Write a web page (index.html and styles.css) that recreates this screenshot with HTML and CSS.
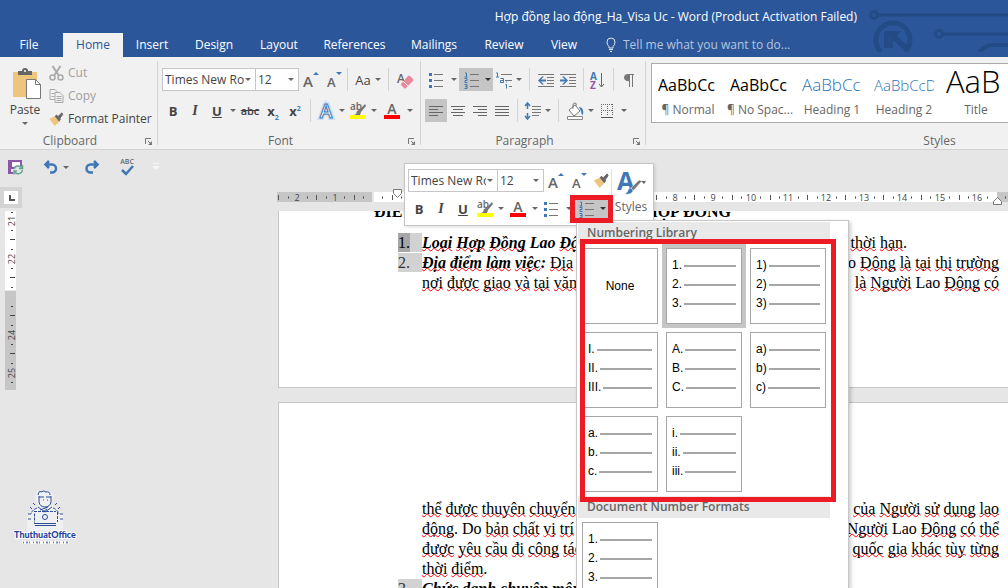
FILE: index.html
```html
<!DOCTYPE html>
<html lang="en">
<head>
<meta charset="utf-8">
<meta name="viewport" content="width=device-width, initial-scale=1">
<title>Hợp đồng lao động_Ha_Visa Uc - Word</title>
<link rel="stylesheet" href="styles.css">
</head>
<body>
<svg class="sprite" aria-hidden="true">
  <symbol id="grow" viewBox="0 0 22 22"><text x="3" y="18" class="g-letter" font-size="15">A</text><path d="M13 6l3-3 3 3z" fill="#3f78b5"/></symbol>
  <symbol id="shrink" viewBox="0 0 22 22"><text x="4" y="18" class="g-letter" font-size="13">A</text><path d="M13 3h6l-3 3z" fill="#3f78b5"/></symbol>
  <symbol id="eraser" viewBox="0 0 22 22"><text x="3" y="14" class="g-letter" font-size="12">A</text><path d="M7 15l7-8q1-1 2 0l3 3q1 1 0 2l-7 7q-1 1-2 0l-3-3z" fill="#e8889a"/><path d="M9 12l5 5" stroke="#f1f1f1"/></symbol>
  <symbol id="effects" viewBox="0 0 22 22"><text x="11" y="18" text-anchor="middle" font-size="19" class="g-glow">A</text><text x="11" y="18" text-anchor="middle" font-size="19" class="g-effect">A</text></symbol>
  <symbol id="highlight" viewBox="0 0 22 22"><text x="3" y="10" class="g-letter" font-size="10">ab</text><path d="M18 4l-6 6-2 1-1 3-2 1 6 0 1-3 5-6z" fill="#777"/><path d="M3 15h16v4H3z" fill="#ff0"/></symbol>
  <symbol id="fontcolor" viewBox="0 0 22 22"><text x="11" y="14" text-anchor="middle" class="g-letter" font-size="14">A</text><path d="M3 15h16v4H3z" fill="#f00"/></symbol>
  <symbol id="bullets" viewBox="0 0 22 22"><path d="M3 4h3v3H3zM3 10h3v3H3zM3 16h3v3H3z" fill="#3f78b5"/><path d="M8 5.500h9M8 11.500h9M8 17.500h9" stroke="#777"/></symbol>
  <symbol id="numbering" viewBox="0 0 22 22"><path d="M4 4h1.500v4M3.500 8h3M3.500 9.500h2.500v2h-2v2h2.500M3.500 15.500h2.500v4h-2.500M4 17.500h2" fill="none" stroke="#3f78b5"/><path d="M9 5.500h9M9 11.500h9M9 17.500h9" stroke="#777"/></symbol>
  <symbol id="multilevel" viewBox="0 0 22 22"><path d="M3 4h1.500v4M6 8H3" fill="none" stroke="#3f78b5"/><path d="M7.500 9.500h3v4h-3v-2h3M12.500 15.500h1v4M13 13h1" fill="none" stroke="#3f78b5"/><path d="M8 5.500h11M12 11.500h7M16 17.500h3" stroke="#777"/></symbol>
  <symbol id="outdent" viewBox="0 0 22 22"><path d="M3 5.500h16M12 8.500h7M12 11.500h7M12 14.500h7M3 17.500h16" stroke="#777"/><path d="M3 11.500l4-4h2l-3 3h5v2H6l3 3H7z" fill="#3f78b5"/></symbol>
  <symbol id="indent" viewBox="0 0 22 22"><path d="M3 5.500h16M12 8.500h7M12 11.500h7M12 14.500h7M3 17.500h16" stroke="#777"/><path d="M11 11.500l-4-4H5l3 3H3v2h5l-3 3h2z" fill="#3f78b5"/></symbol>
  <symbol id="sort" viewBox="0 0 22 22"><text x="3" y="11" font-size="10" class="g-blue">A</text><text x="3" y="20" font-size="10" class="g-purple">Z</text><path d="M14.500 4v14M12 15l2.500 3 2.500-3" fill="none" stroke="#666"/></symbol>
  <symbol id="pilcrow" viewBox="0 0 22 22"><path d="M6 9a4 4 0 0 1 4-4h6v1h-1v12h-1V6h-2v12h-1v-6a4 4 0 0 1-5-3z" fill="#777"/></symbol>
  <symbol id="left" viewBox="0 0 22 22"><path d="M4 6.500h14M4 9.500h9M4 12.500h14M4 15.500h9" stroke="#666"/></symbol>
  <symbol id="center" viewBox="0 0 22 22"><path d="M4 6.500h14M6 9.500h10M4 12.500h14M6 15.500h10" stroke="#666"/></symbol>
  <symbol id="right" viewBox="0 0 22 22"><path d="M4 6.500h14M9 9.500h9M4 12.500h14M9 15.500h9" stroke="#666"/></symbol>
  <symbol id="justify" viewBox="0 0 22 22"><path d="M4 6.500h14M4 9.500h14M4 12.500h14M4 15.500h14" stroke="#666"/></symbol>
  <symbol id="spacing" viewBox="0 0 22 22"><path d="M6.500 3v6M6.500 13v6M4 6l2.500-3L9 6M4 16l2.500 3L9 16" fill="none" stroke="#3f78b5" stroke-width="1.500"/><path d="M11 6.500h9M11 9.500h9M11 12.500h9M11 15.500h7" stroke="#777"/></symbol>
  <symbol id="fill" viewBox="0 0 22 22"><path d="M5 10l6-5 5 6-6 5z" fill="#fff" stroke="#777"/><path d="M9 9V5q0-2 2-2t1 3" fill="none" stroke="#777"/><path d="M15 7q5 0 4 8-2-1-2-4z" fill="#3f78b5"/><path d="M3.500 16.500h15v3h-15z" fill="#fff" stroke="#888"/></symbol>
  <symbol id="borders" viewBox="0 0 22 22"><path d="M5 4.500h12M5 10.500h12M5.500 4v12M11.500 4v12M16.500 4v12" stroke="#666" stroke-dasharray="1 1"/><path d="M5 17.500h12" stroke="#555"/></symbol>
  <symbol id="brush" viewBox="0 0 18 18"><path d="M1 9l6-3 5 6-5 5q-3-4-6-8z" fill="#edc57c"/><path d="M7 6l2-2 5 5-2 3z" fill="#666"/><path d="M11 6l4-4 1 2-3 4z" fill="#666" stroke="#666"/></symbol>
  <symbol id="launcher" viewBox="0 0 9 9"><path d="M1.500 7V1.500H7M4 4l3 3" fill="none" stroke="#777"/><path d="M8 4v4H4z" fill="#777"/></symbol>
</svg>

<header class="titlebar">
  <svg class="circuit" viewBox="0 0 140 52" aria-hidden="true">
    <g fill="none" stroke="#234b86" stroke-width="3"><circle cx="6" cy="15" r="3.500"/><path d="M10 15h130"/><circle cx="71" cy="34" r="3.500"/><path d="M75 34h65"/><path d="M111 52q7-7 13-7h16" stroke-width="4"/></g>
    <path d="M13 52A17 17 0 1 1 37 52" fill="none" stroke="#234b86" stroke-width="5"/><path d="M16 31h17l-4 5 11 10-4 4-11-10v8h-9z" fill="#234b86"/><path d="M22 38l-1 7v-7z" fill="#2b579a"/>
  </svg>
  <h1 class="title">Hợp đồng lao động_Ha_Visa Uc - Word (Product Activation Failed)</h1>
  <div class="tabrow">
    <nav class="tabs">
      <button>File</button><button class="active">Home</button><button>Insert</button><button>Design</button><button>Layout</button><button>References</button><button>Mailings</button><button>Review</button><button>View</button>
    </nav>
    <label class="tell">
      <svg width="10" height="16" viewBox="0 0 10 16" aria-hidden="true"><path d="M3 11V9.500Q1 8 1 5a4 4 0 0 1 8 0q0 3-2 4.500V11zM3 12.500h4M4 14.500h2" fill="none" stroke="#dfe7f2"/></svg>
      <input type="text" placeholder="Tell me what you want to do..." aria-label="Tell me what you want to do">
    </label>
  </div>
</header>

<section class="ribbon">
  <section class="group clipboard">
    <div class="clip">
      <button class="paste">
        <svg width="30" height="32" viewBox="0 0 30 32" aria-hidden="true"><path d="M1 4h24v25H1z" fill="#edc57c"/><path d="M6 7V3h4q0-3 3-3t3 3h4v4z" fill="#666"/><circle cx="13" cy="3" r="1" fill="#fff"/><path d="M14.500 11.500h9l5 5v14h-14z" fill="#fff" stroke="#777"/><path d="M23.500 11.500v5h5" fill="none" stroke="#777"/></svg>
        <span>Paste</span><i class="caret"></i>
      </button>
      <div class="clip-list">
        <button class="off"><svg width="16" height="16" viewBox="0 0 16 16" aria-hidden="true"><path d="M4 1l6 9M12 1L6 10" stroke="#aaa" stroke-width="2"/><circle cx="4" cy="12.500" r="2.500" fill="none" stroke="#aaa" stroke-width="1.500"/><circle cx="12" cy="12.500" r="2.500" fill="none" stroke="#aaa" stroke-width="1.500"/></svg>Cut</button>
        <button class="off"><svg width="16" height="16" viewBox="0 0 16 16" aria-hidden="true"><path d="M1.500 1.500h5l2 2v8h-7zM3 5.500h4M3 8.500h3" fill="none" stroke="#aaa"/><path d="M6.500 4.500h5l3 3v7h-8z" fill="#f1f1f1" stroke="#aaa"/><path d="M8 8.500h5M8 10.500h5M8 12.500h5" stroke="#aaa"/></svg>Copy</button>
        <button><svg width="16" height="16" aria-hidden="true"><use href="#brush"/></svg>Format Painter</button>
      </div>
    </div>
    <footer><span>Clipboard</span><button aria-label="Clipboard settings"><svg width="9" height="9"><use href="#launcher"/></svg></button></footer>
  </section>

  <section class="group font">
    <div class="tools">
      <label class="combo w94"><select aria-label="Font"><option>Times New Roman</option></select></label><label class="combo w43"><select aria-label="Font size"><option>12</option></select></label>
      <button class="w24" aria-label="Grow font"><svg><use href="#grow"/></svg></button><button aria-label="Shrink font"><svg><use href="#shrink"/></svg></button><i class="sep w5"></i><button class="w36">Aa<i class="caret"></i></button><i class="sep w5"></i><button class="w28" aria-label="Clear formatting"><svg><use href="#eraser"/></svg></button>
    </div>
    <div class="tools">
      <button><b>B</b></button><button><em>I</em></button><button><u>U</u></button><button class="w10" aria-label="Underline style"><i class="caret"></i></button><button class="w24"><s>abc</s></button><button><b>x<sub>2</sub></b></button><button><b>x<sup>2</sup></b></button><i class="sep w8"></i><button class="w24" aria-label="Text effects"><svg><use href="#effects"/></svg></button><button class="w8" aria-label="More effects"><i class="caret"></i></button><button class="w24" aria-label="Highlight"><svg><use href="#highlight"/></svg></button><button class="w8" aria-label="Highlight colours"><i class="caret"></i></button><button class="w28" aria-label="Font colour"><svg><use href="#fontcolor"/></svg></button><button class="w8" aria-label="Font colours"><i class="caret"></i></button>
    </div>
    <footer><span>Font</span><button aria-label="Font settings"><svg width="9" height="9"><use href="#launcher"/></svg></button></footer>
  </section>

  <section class="group para">
    <div class="tools">
      <button class="w24" aria-label="Bullets"><svg><use href="#bullets"/></svg></button><button class="w10" aria-label="Bullet styles"><i class="caret"></i></button><button class="w34 on" aria-label="Numbering"><svg><use href="#numbering"/></svg><i class="caret dark"></i></button><button aria-label="Multilevel list"><svg><use href="#multilevel"/></svg></button><button class="w8" aria-label="Multilevel styles"><i class="caret"></i></button><i class="sep w12"></i><button aria-label="Decrease indent"><svg><use href="#outdent"/></svg></button><button aria-label="Increase indent"><svg><use href="#indent"/></svg></button><i class="sep w8"></i><button aria-label="Sort"><svg><use href="#sort"/></svg></button><i class="sep w8"></i><button class="w24" aria-label="Show marks"><svg><use href="#pilcrow"/></svg></button>
    </div>
    <div class="tools">
      <button class="on" aria-label="Align left"><svg><use href="#left"/></svg></button><button aria-label="Center"><svg><use href="#center"/></svg></button><button aria-label="Align right"><svg><use href="#right"/></svg></button><button aria-label="Justify"><svg><use href="#justify"/></svg></button><i class="sep w8"></i><button aria-label="Line spacing"><svg><use href="#spacing"/></svg></button><button class="w10" aria-label="Spacing options"><i class="caret"></i></button><i class="sep w10"></i><button class="w24" aria-label="Shading"><svg><use href="#fill"/></svg></button><button class="w8" aria-label="Shading colours"><i class="caret"></i></button><button class="w24" aria-label="Borders"><svg><use href="#borders"/></svg></button><button class="w10" aria-label="Border options"><i class="caret"></i></button>
    </div>
    <footer><span>Paragraph</span><button aria-label="Paragraph settings"><svg width="9" height="9"><use href="#launcher"/></svg></button></footer>
  </section>

  <section class="group styles">
    <div class="gallery">
      <button><span class="sample">AaBbCc</span><span>¶ Normal</span></button>
      <button><span class="sample">AaBbCc</span><span>¶ No Spac...</span></button>
      <button><span class="sample h1">AaBbCc</span><span>Heading 1</span></button>
      <button><span class="sample h2">AaBbCcD</span><span>Heading 2</span></button>
      <button><span class="sample big">AaB</span><span>Title</span></button>
    </div>
    <footer><span>Styles</span></footer>
  </section>
</section>

<nav class="quick" aria-label="Quick access">
  <button aria-label="Save"><svg width="16" height="16" viewBox="0 0 16 16"><path d="M0 1h14v6h-2V3H4v5h3v2H3v3h2v2H0z" fill="#8c55aa"/><path d="M4 3h8v4H4z" fill="#fff"/><path d="M6 10a4.500 4.500 0 0 1 8-1M14.500 11a4.500 4.500 0 0 1-8 2M14.500 6v3.500H11M6 15.500V12h3" fill="none" stroke="#62a58d" stroke-width="1.500"/></svg></button>
  <button aria-label="Undo"><svg width="16" height="16" viewBox="0 0 16 16"><path d="M6 2L2.500 5.500 6 9M2.500 5.500H9a4 4 0 0 1 0 8H7" fill="none" stroke="#3f78b5" stroke-width="2.500"/></svg><i class="caret"></i></button>
  <button aria-label="Redo"><svg width="16" height="16" viewBox="0 0 16 16"><path d="M10 2l3.500 3.500L10 9M13.500 5.500H6.500a4 4 0 0 0 0 8H9" fill="none" stroke="#3f78b5" stroke-width="2.500"/></svg></button>
  <button aria-label="Spelling"><svg width="16" height="18" viewBox="0 0 16 18"><text x="8" y="6" text-anchor="middle" class="g-letter" font-size="7">ABC</text><path d="M3 12l4 4 7-8" fill="none" stroke="#3f78b5" stroke-width="2.500"/></svg></button>
  <button aria-label="Customize"><svg width="8" height="8" viewBox="0 0 8 8"><path d="M1 .5h6M1 3.500h6l-3 3z" fill="#f6f6f6" stroke="#f6f6f6"/></svg></button>
</nav>

<div class="ruler-row">
  <button class="tabstop" aria-label="Tab stop"><svg width="14" height="14" viewBox="0 0 14 14"><path d="M5 4h2v4h4v2H5z" fill="#555"/></svg></button>
  <div class="ruler">
    <svg width="736" height="20" viewBox="274 187 736 20" aria-hidden="true">
      <path d="M277 192h95v10h-95zM997 192h13v10h-13z" fill="#c6c6c6"/><path d="M374 192h623v10H374z" fill="#fff"/>
      <path d="M278.500 195v5M316.500 195v5M354.500 195v5M392.500 195v5M656.500 195v5M694.500 195v5M732.500 195v5M770.500 195v5M807.500 195v5M845.500 195v5M883.500 195v5M921.500 195v5M959.500 195v5" stroke="#555"/>
      <path d="M288 197.500h1M307 197.500h1M326 197.500h1M344 197.500h1M363 197.500h1M382 197.500h1M401 197.500h1M666 197.500h1M685 197.500h1M704 197.500h1M722 197.500h1M741 197.500h1M760 197.500h1M779 197.500h1M798 197.500h1M817 197.500h1M836 197.500h1M855 197.500h1M874 197.500h1M893 197.500h1M911 197.500h1M930 197.500h1M949 197.500h1M968 197.500h1M987 197.500h1M1005 197.500h1" stroke="#444" stroke-width="2"/>
      <g class="ticks"><text x="297" y="201">2</text><text x="335" y="201">1</text><text x="675" y="201">8</text><text x="713" y="201">9</text><text x="751" y="201">10</text><text x="788" y="201">11</text><text x="826" y="201">12</text><text x="864" y="201">13</text><text x="902" y="201">14</text><text x="940" y="201">15</text><text x="977" y="201">16</text></g>
      <path d="M393.500 189.500h8v4l-4 4-4-4zM993.500 204.500v-3l4-4 4 4v3z" fill="#fff" stroke="#777"/>
    </svg>
  </div>
</div>

<main class="workspace">
  <svg class="vruler" width="11" height="179" viewBox="0 0 11 179" aria-hidden="true">
    <path d="M0 0h11v79H0z" fill="#fff"/><path d="M0 80h11v99H0z" fill="#c6c6c6"/>
    <path d="M5 28.500h5M5 66.500h5M5 104.500h5M5 142.500h5" stroke="#444"/>
    <path d="M6 1.500h2M6 19.500h2M6 38.500h2M6 57.500h2M6 76.500h2M6 95.500h2M6 114.500h2M6 133.500h2M6 152.500h2M6 171.500h2" stroke="#444"/>
    <g class="ticks"><text transform="translate(10 10)rotate(-90)">21</text><text transform="translate(10 48)rotate(-90)">22</text><text transform="translate(10 124)rotate(-90)">24</text><text transform="translate(10 162)rotate(-90)">25</text></g>
  </svg>
  <div class="pages">
    <article class="page first" lang="vi">
      <h2><span>ĐIỀU 1:</span><span>HỢP ĐỒNG</span></h2>
      <div class="item"><span class="num sel"><i>1.</i></span><p class="line"><span><strong><q>Loại</q> <q>Hợp</q> <q>Đồng</q> Lao <q>Động</q></strong></span><span class="short"><q>thời</q> <q>hạn</q>.</span></p></div>
      <div class="item"><span class="num">2.</span><div>
        <p class="line"><span><strong><q>Địa</q> <q>điểm</q> <q>làm</q> <q>việc</q>:</strong> <q>Địa</q></span><span>Lao <q>Động</q> <q>là</q> <q>tại</q> <q>thị</q> <q>trường</q></span></p>
        <p class="line"><span><q>nơi</q> <q>được</q> <q>giao</q> <q>và</q> <q>tại</q> <q>văn</q></span><span><q>là</q> <q>Người</q> Lao <q>Động</q> <q>có</q></span></p></div>
      </div>
    </article>
    <article class="page second" lang="vi">
      <div class="item"><span></span><div>
        <p class="line"><span><q>thể</q> <q>được</q> <q>thuyên</q> <q>chuyển</q></span><span><q>của</q> <q>Người</q> <q>sử</q> <q>dụng</q> <q>lao</q></span></p>
        <p class="line"><span><q>động</q>. Do <q>bản</q> <q>chất</q> <q>vị</q> <q>trí</q></span><span><q>Người</q> Lao <q>Động</q> <q>có</q> <q>thể</q></span></p>
        <p class="line"><span><q>được</q> <q>yêu</q> <q>cầu</q> <q>đi</q> <q>công</q> <q>tác</q></span><span><q>quốc</q> <q>gia</q> <q>khác</q> <q>tùy</q> <q>từng</q></span></p>
        <p class="line"><span><q>thời</q> <q>điểm</q>.</span></p></div>
      </div>
      <div class="item"><span class="num">3.</span><p class="line"><span><strong><q>Chức</q> <q>danh</q> <q>chuyên</q> <q>môn</q></strong></span></p></div>
    </article>
  </div>
</main>

<svg class="logo" width="70" height="60" viewBox="0 0 70 60" role="img" aria-label="ThuthuatOffice">
  <path d="M17 38V26q2-6 12-8l-4-8 1-9h14l4 5-3 10q9 3 12 8v17H17z" fill="#f7f9fc" opacity=".5"/>
  <g fill="none" stroke="#2c4c96"><path d="M28 5q1-5 3-3 3-2 5 0 4-1 4 3M29 6v6q1 5 6 5t6-5V6M29 7h5M36 7h5"/><path d="M28 17l7 5 7-5M30 20l8-3M33 22l4-3"/><path d="M27 18q-5 2-6 6M43 18q5 2 6 6M24.500 23.500v9M47.500 22v10M24 21.500h22" stroke-dasharray="3 1"/><circle cx="35" cy="27" r="2.500"/><path d="M24 33.500h22M25 35.500h21"/><path d="M18 24h3M18 29h3M20 17l2 2M23 13l2 2M50 24h3M50 29h3M50 17l-2 2M47 13l-2 2M33 10h1M37 10h1"/></g>
  <text x="35" y="48" text-anchor="middle" class="brand">ThuthuatOffice</text>
  <path d="M12 52.500h47" stroke="#fff" stroke-width="3"/><path d="M13 52.500h45" stroke="#7287b8" stroke-width="2" stroke-dasharray="1 2 2 1 1 3"/>
</svg>

<aside class="mini" aria-label="Mini toolbar">
  <div class="mini-main">
    <div class="tools">
      <label class="combo w90"><select aria-label="Font name"><option>Times New Roman</option></select></label><label class="combo w46"><select aria-label="Text size"><option>12</option></select></label>
      <button class="w24" aria-label="Grow"><svg><use href="#grow"/></svg></button><button aria-label="Shrink"><svg><use href="#shrink"/></svg></button><button aria-label="Format painter"><svg class="small"><use href="#brush"/></svg></button>
    </div>
    <div class="tools">
      <button><b>B</b></button><button><em>I</em></button><button><u>U</u></button><button aria-label="Highlighter"><svg><use href="#highlight"/></svg></button><button class="w10" aria-label="Highlighter colours"><i class="caret"></i></button><button class="w24" aria-label="Colour"><svg><use href="#fontcolor"/></svg></button><button class="w10" aria-label="Colours"><i class="caret"></i></button><button class="w24" aria-label="Bullet list"><svg><use href="#bullets"/></svg></button><button class="w10" aria-label="Bullet list styles"><i class="caret"></i></button><button class="w34 on" aria-label="Numbered list"><svg><use href="#numbering"/></svg><i class="caret dark"></i></button>
    </div>
  </div>
  <button class="mini-styles"><svg width="32" height="28" viewBox="0 0 32 28" aria-hidden="true"><text x="2" y="21" font-size="25" class="g-blue">A</text><path d="M24 11l-8 8-2 4 5-2 8-9z" fill="#777" stroke="#fff" stroke-width=".5"/><path d="M14 19q4 0 4 3-2 4-8 3 3-2 4-6z" fill="#3f78b5" stroke="#fff" stroke-width=".5"/><path d="M26 12h5l-2 3z" fill="#666"/></svg><span>Styles</span></button>
</aside>

<aside class="menu" aria-label="Numbering">
  <h3>Numbering Library</h3>
  <div class="grid">
    <button class="cell none">None</button>
    <button class="cell chosen"><span>1.</span><span>2.</span><span>3.</span></button>
    <button class="cell"><span>1)</span><span>2)</span><span>3)</span></button>
    <button class="cell"><span>I.</span><span>II.</span><span>III.</span></button>
    <button class="cell"><span>A.</span><span>B.</span><span>C.</span></button>
    <button class="cell"><span>a)</span><span>b)</span><span>c)</span></button>
    <button class="cell"><span>a.</span><span>b.</span><span>c.</span></button>
    <button class="cell"><span>i.</span><span>ii.</span><span>iii.</span></button>
  </div>
  <h3>Document Number Formats</h3>
  <div class="grid"><button class="cell"><span>1.</span><span>2.</span><span>3.</span></button></div>
</aside>
<div class="mark mark-button"></div>
<div class="mark mark-library"></div>
</body>
</html>
```

FILE: styles.css
```css
* { box-sizing: border-box; }
body {
  margin: 0;
  height: 100vh;
  display: flex;
  flex-direction: column;
  position: relative;
  overflow: hidden;
  background: #e6e6e6;
  color: #444;
  font: 12px/16px "Segoe UI", "Open Sans", "Noto Sans", sans-serif;
}
button, input, select { font: inherit; color: inherit; }
button {
  border: 0;
  padding: 0;
  background: none;
  display: flex;
  align-items: center;
  justify-content: center;
}
h1, h2, h3, p { margin: 0; font-size: inherit; font-weight: inherit; }
.sprite { display: none; }
.g-letter { font-weight: 600; fill: #666; }
.g-blue { font-weight: 700; fill: #3f78b5; }
.g-purple { font-weight: 700; fill: #8c55aa; }
.g-effect { font-weight: 600; fill: #fff; stroke: #3f78b5; stroke-width: 1px; }
.g-glow { font-weight: 600; fill: none; stroke: #cfe0f2; stroke-width: 4px; }

/* Title bar */
.titlebar { position: relative; flex: none; background: #2b579a; color: #fff; }
.circuit { position: absolute; right: 0; top: 0; width: 140px; height: 52px; }
.title { position: relative; height: 33px; padding-right: 151px; line-height: 33px; text-align: right; }
.tabrow { position: relative; display: flex; }
.tabs {
  display: grid;
  grid-template-columns: 63px 60px 58px 66px 64px 87px 72px 68px 52px;
  height: 24px;
}
.tabs button:first-child { padding-right: 5px; }
.tabs .active { background: #f1f1f1; color: #2b579a; }
.tell { flex: 1; display: flex; align-items: center; gap: 7px; padding-left: 16px; }
.tell input { flex: 1; border: 0; padding: 0; background: none; outline: 0; }
.tell input::placeholder { color: #b5c5de; opacity: 1; }

/* Ribbon */
.ribbon {
  flex: none;
  display: flex;
  overflow: hidden;
  padding: 4px 0;
  height: 93px;
  background: #f1f1f1;
  border-bottom: 1px solid #d2d2d2;
}
.group { flex: none; display: flex; flex-direction: column; border-right: 1px solid #d4d4d4; }
.clipboard { width: 158px; }
.font { width: 263px; }
.para { width: 225px; }
.styles { width: 588px; }
.font, .para { gap: 8px; padding: 7px 0 0 4px; }
.group footer { margin: auto 0 -4px; display: flex; align-items: center; color: #666; }
.group footer span { flex: 1; text-align: center; }
.group footer button { width: 17px; }
.group.font footer, .group.para footer { margin-left: -4px; }
.clip { display: flex; }
.paste { width: 48px; flex-direction: column; padding: 2px 0 0 2px; }
.paste svg { margin: 0 0 2px 4px; }
.paste .caret { margin-top: 4px; }
.clip-list { display: grid; grid-auto-rows: 23px; }
.clip-list button { gap: 3px; justify-content: flex-start; }
.clip-list svg { width: 17px; }
.off { color: #a0a0a0; }
.tools { display: flex; height: 23px; }
.tools button { width: 22px; flex: none; }
.tools svg { width: 22px; height: 22px; flex: none; }
.tools svg.small { width: 17px; height: 17px; }
.tools b { font-size: 13px; }
.tools em { font: italic bold 14px "Liberation Serif", serif; }
.tools u { font-size: 13px; font-weight: 700; }
.tools s { font-size: 11px; font-weight: 600; }
.tools sub, .tools sup { font-size: 7px; line-height: 0; color: #3f78b5; }
.tools .on { background: #c5c5c5; }
.tools .w5 { width: 5px; }
.tools .w8 { width: 8px; }
.tools .w10 { width: 10px; }
.tools .w12 { width: 12px; }
.tools .w24 { width: 24px; }
.tools .w28 { width: 28px; }
.tools .w34 { width: 34px; }
.tools .w36 { width: 36px; font-size: 13px; }
.w36 .caret { margin-left: 4px; }
.w43 { width: 43px; }
.w46 { width: 46px; }
.w90 { width: 90px; }
.w94 { width: 94px; }
.caret {
  flex: none;
  width: 0;
  border: 3px solid transparent;
  border-top-color: #666;
  border-bottom: 0;
}
.caret.dark { border-top-color: #333; margin-left: 2px; }
.sep { display: flex; justify-content: center; }
.sep::before { content: ""; width: 1px; background: #d4d4d4; }
.combo {
  position: relative;
  display: flex;
  background: #fff;
  border: 1px solid #c6c6c6;
}
.combo + .combo { border-left: 0; }
.combo select {
  appearance: none;
  width: 100%;
  border: 0;
  padding: 0 11px 0 2px;
  background: none;
  overflow: hidden;
}
.combo::after {
  content: "";
  position: absolute;
  right: 4px;
  top: 9px;
  border: 3px solid transparent;
  border-top-color: #666;
  border-bottom: 0;
}
.gallery {
  display: flex;
  margin: 2px 0 0 5px;
  height: 60px;
  background: #fff;
  border: 1px solid #ababab;
}
.gallery button { width: 72px; flex-direction: column; justify-content: flex-end; padding-bottom: 4px; color: #666; white-space: nowrap; }
.gallery .sample {
  width: 60px;
  height: 34px;
  line-height: 34px;
  overflow: hidden;
  text-align: left;
  font-size: 16px;
  color: #000;
}
.gallery .h1 { color: #2e74b5; font-size: 17px; font-weight: 300; }
.gallery .h2 { color: #2e74b5; font-size: 15px; font-weight: 300; }
.gallery .big { font-size: 31px; line-height: 26px; font-weight: 300; }

/* Quick access */
.quick { flex: none; display: flex; align-items: center; height: 37px; padding: 0 0 3px 8px; }
.quick button { height: 20px; }
.quick button:nth-child(2) { margin-left: 19px; gap: 4px; }
.quick button:nth-child(3) { margin-left: 15px; }
.quick button:nth-child(4) { margin-left: 19px; }
.quick button:nth-child(5) { margin-left: 17px; }

/* Rulers */
.ruler-row { flex: none; display: flex; height: 24px; padding-bottom: 3px; }
.tabstop { flex: none; width: 22px; height: 21px; border: 4px solid #d4d4d4; background: #fff; }
.ruler { flex: 1; margin-left: 252px; overflow: hidden; }
.ruler svg { display: block; }
.ticks text { font-size: 9px; fill: #444; text-anchor: middle; }

/* Document */
.workspace { flex: 1; display: flex; min-height: 0; }
.vruler { flex: none; margin-left: 5px; }
.pages { flex: 1; min-width: 0; display: flex; flex-direction: column; gap: 14px; margin-left: 262px; }
.page {
  flex: none;
  overflow: hidden;
  padding: 0 9px 0 119px;
  background: #fff;
  border: 1px solid #c6c6c6;
  border-right: 0;
  color: #000;
  font: 16px/20px "Liberation Serif", serif;
}
.first { border-top: 0; padding-bottom: 94px; }
.second { padding-top: 96px; }
.page h2 { display: flex; justify-content: space-between; margin: -9px 268px 11px -24px; font-weight: 700; }
.item { display: grid; grid-template-columns: 24px 1fr; }
.num { height: 19px; background: #d2d2d2; color: #333; }
.num i { display: block; width: 12px; height: 19px; font-style: normal; }
.sel i { background: #a6a6a6; color: #000; }
.line { display: flex; justify-content: space-between; white-space: nowrap; }
.line .short { padding-right: 92px; }
.page strong { font-style: italic; }
.page q { quotes: none; text-decoration: underline wavy #f00 1px; text-decoration-skip-ink: none; text-underline-offset: -1px; }

.logo { position: absolute; left: 10px; top: 490px; }
.brand { font: 900 9px Lato, sans-serif; fill: #24439a; stroke: #fff; stroke-width: 2px; paint-order: stroke; }

/* Floating toolbar */
.mini {
  position: absolute;
  left: 404px;
  top: 163px;
  display: flex;
  padding: 5px 3px 4px;
  background: #fff;
  border: 1px solid #c6c6c6;
  box-shadow: 1px 1px 3px #0002;
}
.mini-main { display: grid; gap: 4px; border-right: 1px solid #e1e1e1; width: 204px; height: 52px; }
.mini-styles { width: 38px; flex-direction: column; justify-content: flex-start; gap: 2px; color: #666; }

/* Numbering menu */
.menu {
  position: absolute;
  left: 576px;
  top: 220px;
  bottom: 0;
  width: 273px;
  overflow: hidden;
  padding: 1px 0 0 1px;
  background: #fff;
  border: 1px solid #c6c6c6;
  border-bottom: 0;
  box-shadow: 2px 2px 4px #0003;
}
.menu h3 { width: 252px; height: 22px; line-height: 22px; padding-left: 9px; background: #e9e9e9; color: #666; font-weight: 600; }
.grid { display: grid; grid-template-columns: repeat(3, 76px); grid-auto-rows: 76px; gap: 8px; padding: 4px; }
.cell {
  flex-direction: column;
  align-items: stretch;
  justify-content: flex-start;
  padding: 7px 5px;
  border: 1px solid #a6a6a6;
  background: #fff;
  color: #000;
  font: 12px/19px "Liberation Sans", sans-serif;
}
.cell span { display: flex; align-items: center; gap: 2px; }
.cell span::after { content: ""; flex: 1; height: 2px; background: #a6a6a6; }
.cell.none { align-items: center; justify-content: center; }
.cell.chosen { box-shadow: 0 0 0 4px #c5c5c5; }

.mark { position: absolute; border: 5px solid #ed1c24; pointer-events: none; }
.mark-button { left: 570px; top: 195px; width: 43px; height: 28px; }
.mark-library { left: 580px; top: 239px; width: 256px; height: 263px; }
```
